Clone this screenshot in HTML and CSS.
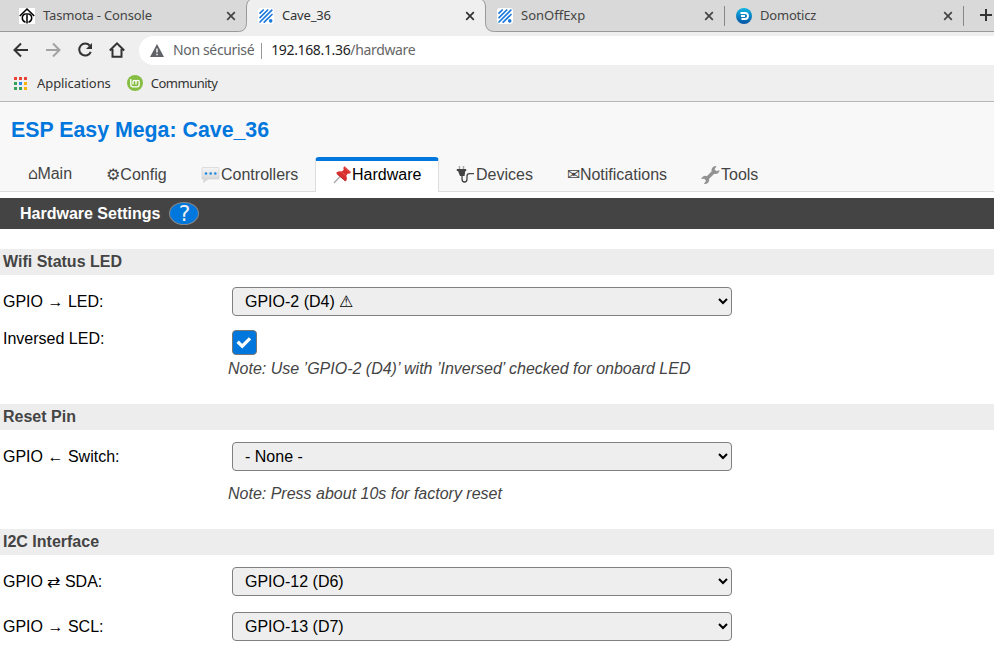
FILE: index.html
```html
<!DOCTYPE html>
<html lang="fr">
<head>
<meta charset="utf-8">
<title>Cave_36</title>
<link rel="stylesheet" href="styles.css">
</head>
<body>
<svg class="defs" width="0" height="0">
  <symbol id="close" viewBox="0 0 10 10"><path d="M1.2 1.2 8.800 8.800M8.800 1.2 1.2 8.800" stroke="currentColor" stroke-width="1.7" fill="none"/></symbol>
  <symbol id="esp" viewBox="0 0 16 16"><rect width="16" height="16" rx="3" fill="#fff"/><path d="M2 5.200 5.200 2M2 9.700 9.700 2M2 14 13.800 2.200M6.200 14.200 14 6.500" stroke="#1b79dc" stroke-width="1.700" stroke-linecap="round"/><circle cx="12.700" cy="12.900" r="1.800" fill="#1b79dc"/></symbol>
</svg>
<div class="strip">
  <svg class="strip-shape" width="994" height="32" viewBox="0 0 994 32">
    <path d="M-1 -1H251Q246.500 1 246.500 7V22.500Q246.500 31.500 238.500 31.500H-1Z"/>
    <path d="M481 -1Q485.500 1 485.500 7V22.500Q485.500 31.500 494.500 31.500H996V-1Z"/>
  </svg>
  <div class="tab t1">
    <svg class="fav" viewBox="0 0 16 16"><rect width="16" height="16" fill="#fff"/><path d="M.8 8 8 1 15.200 8" fill="none" stroke="#000" stroke-width="1.600"/><path d="M8 5V15.500M6.800 5.800Q3.300 6.800 3.300 10T6.500 14.200M9.200 5.800Q12.700 6.800 12.700 10T9.500 14.200" fill="none" stroke="#000" stroke-width="1.500"/></svg>
    <span class="s1">Tasmota - Console</span><svg class="x"><use href="#close"/></svg>
  </div>
  <div class="tab t2 active"><svg class="fav"><use href="#esp"/></svg><span class="s2">Cave_36</span><svg class="x"><use href="#close"/></svg></div>
  <div class="tab t3"><svg class="fav"><use href="#esp"/></svg><span class="s3">SonOffExp</span><svg class="x"><use href="#close"/></svg></div>
  <div class="tab t4">
    <svg class="fav" viewBox="0 0 16 16"><defs><linearGradient id="dom" x2="0" y2="1"><stop stop-color="#10b6e2"/><stop offset="1" stop-color="#0753a5"/></linearGradient></defs><circle cx="8" cy="8" r="8" fill="url(#dom)"/><path d="M4.500 5H9a3 3 0 0 1 0 6H5.500M5 8H9" fill="none" stroke="#fff" stroke-width="1.800"/></svg>
    <span class="s4">Domoticz</span><svg class="x"><use href="#close"/></svg>
  </div>
  <svg class="plus" viewBox="0 0 12 12"><path d="M6 0V12M0 6H12" stroke="#333" stroke-width="2"/></svg>
</div>
<div class="toolbar">
  <svg class="nav-ico" viewBox="0 0 16 16"><path d="M15 8H2M8 1.500 1.500 8 8 14.500" /></svg>
  <svg class="nav-ico dim" viewBox="0 0 16 16"><path d="M1 8H14M8 1.500 14.500 8 8 14.500"/></svg>
  <svg class="nav-ico" viewBox="0 0 16 16"><path d="M12.800 3.600A6 6 0 1 0 13.800 9.800"/><path d="M15 1V7H9Z" class="solid"/></svg>
  <svg class="nav-ico" viewBox="0 0 16 16"><path d="M0.800 8.500 8 1.300 15.200 8.500M3.500 7V14.700H12.500V7"/></svg>
  <div class="omnibox">
    <svg class="warn" viewBox="0 0 14 13"><path d="M7 0 14 13H0Z" fill="#5f6368"/><path d="M7 4.500V8.500M7 9.700V11.200" stroke="#fff" stroke-width="1.400"/></svg>
    <span class="insecure">Non sécurisé</span><i class="bar"></i><span class="url">192.168.1.36<em>/hardware</em></span>
  </div>
</div>
<div class="bookmarks">
  <svg class="apps" viewBox="0 0 13 13"><path fill="#ea4335" d="M0 0h3v3H0zM5 0h3v3H5zM10 0h3v3h-3z"/><path fill="#34a05a" d="M0 5h3v3H0zM0 10h3v3H0zM5 10h3v3H5z"/><path fill="#2d85f0" d="M5 5h3v3H5z"/><path fill="#fbb30b" d="M10 5h3v3h-3zM10 10h3v3h-3z"/></svg>
  <span class="b1">Applications</span>
  <svg class="mint" viewBox="0 0 16 16"><circle cx="8" cy="8" r="8" fill="#86be43"/><path d="M3.800 4V9.500Q3.800 11.800 6 11.800H10Q12.200 11.800 12.200 9.500V7Q12.200 5.300 10.600 5.300T9 7V9.500M9 7Q9 5.300 7.500 5.300T6 7V9.500" fill="none" stroke="#fff" stroke-width="1.300"/></svg>
  <span class="b2">Community</span>
</div>
<header>
  <h1>ESP Easy Mega: Cave_36</h1>
  <nav>
    <a class="n1"><span class="gl home">⌂</span>Main</a>
    <a class="n2"><span class="gl">⚙</span>Config</a>
    <a class="n3"><svg class="emo" viewBox="0 0 19 18"><defs><linearGradient id="bub" x2="0" y2="1"><stop stop-color="#f5f5f5"/><stop offset="1" stop-color="#d0d0d0"/></linearGradient></defs><path d="M1.500 1.500H17.500Q18 1.500 18 2.500V13H7L2.500 16.500 3 13H1V2.500Q1 1.500 1.500 1.500Z" fill="url(#bub)" stroke="#d2d2d2" stroke-width=".7"/><g fill="#2089df"><circle cx="5" cy="7.500" r="1.300"/><circle cx="9.700" cy="7.500" r="1.300"/><circle cx="14.300" cy="7.500" r="1.300"/></g></svg>Controllers</a>
    <a class="n4 on"><svg class="emo" viewBox="0 0 19 18"><path d="M1 17 7 10.500" stroke="#aaa" stroke-width="1.300"/><path d="M11.500 0.300 18 6Q17.300 8.200 14.800 7.600L13.200 9.800Q15 13.500 12.500 15.300L3 7Q5 4.600 8.500 5.500L10.700 3.900Q9.500 1.700 11.500 .3Z" fill="#d8302f"/><path d="M11.800 1.700 17 6.200M9 6.500 12 9" stroke="#ea605a" stroke-width=".9"/><path d="M4.300 8.200 12.300 14.800" stroke="#b5262a" stroke-width="1"/></svg>Hardware</a>
    <a class="n5"><svg class="emo" viewBox="0 0 19 18"><path d="M3.500 0V4M7.500 0V4" stroke="#aaa" stroke-width="1.500"/><path d="M.8 3H10.200V5H9.300L8.500 10H4L2 5H.8Z" fill="#444"/><path d="M6 9V13Q6 16 8.500 16T11 13V10Q11 7.700 13.500 7.700H18" fill="none" stroke="#444" stroke-width="1.300"/></svg>Devices</a>
    <a class="n6"><span class="gl mail">✉</span>Notifications</a>
    <a class="n7"><svg class="emo" viewBox="0 0 19 18"><path d="M5 13.500 13.500 5" stroke="#929292" stroke-width="3.600"/><path d="M15.500 .2A4 4 0 1 0 18.500 4L15.500 5.200 13.500 3.200ZM3 17.700A4 4 0 1 0 .3 13L3.300 12.700 5 14.800Z" fill="#929292"/></svg>Tools</a>
  </nav>
</header>
<div class="title">Hardware Settings<span class="help">?</span></div>
<main>
  <h2>Wifi Status LED</h2>
  <div class="row"><label>GPIO → LED:</label><select><option>GPIO-2 (D4) ⚠</option></select></div>
  <div class="row check"><label>Inversed LED:</label><span class="box"><svg viewBox="0 0 25 25"><path d="M5 11.700 10 16.500 18.500 8" fill="none" stroke="#fff" stroke-width="3.600"/></svg></span></div>
  <p class="note">Note: Use ’GPIO-2 (D4)’ with ’Inversed’ checked for onboard LED</p>
  <h2>Reset Pin</h2>
  <div class="row"><label>GPIO ← Switch:</label><select><option>- None -</option></select></div>
  <p class="note reset">Note: Press about 10s for factory reset</p>
  <h2>I2C Interface</h2>
  <div class="row"><label>GPIO ⇄ SDA:</label><select><option>GPIO-12 (D6)</option></select></div>
  <div class="row"><label>GPIO → SCL:</label><select><option>GPIO-13 (D7)</option></select></div>
</main>
</body>
</html>
```
FILE: styles.css
```css
* { box-sizing: border-box; }
html, body { margin: 0; overflow: hidden; }
body { width: 994px; height: 653px; background: #fff; font: 16px/18px "Liberation Sans", Arial, sans-serif; color: #000; }
svg { display: block; flex: none; overflow: visible; }
.defs { position: absolute; }
.strip, .toolbar, .bookmarks { font-family: "Noto Sans", sans-serif; background: #efefef; display: flex; align-items: center; white-space: nowrap; }
.strip { height: 32px; position: relative; font-size: 13px; color: #444; }
.strip-shape { position: absolute; left: 0; top: 0; overflow: hidden; }
.strip-shape path { fill: #d9d9d9; stroke: #999; }
.tab { position: relative; display: flex; align-items: center; height: 31px; width: 239px; padding: 0 11px; }
.tab span { padding-bottom: 2px; }
.tab.t1 { width: 247px; padding-left: 19px; }
.t3::after, .t4::after { content: ""; position: absolute; right: 0; top: 5px; width: 1px; height: 20px; background: #888; }
.active { color: #333; }
.s1 { letter-spacing: -0.16px; }
.s2, .s4 { letter-spacing: -0.2px; }
.fav { width: 16px; height: 16px; margin: 0 8px 1px 0; }
.tab .x { width: 10px; height: 10px; margin: 0 0 1px auto; }
.plus { position: relative; width: 12px; height: 12px; margin: 0 0 2px 16px; }
.toolbar { height: 33px; padding: 4px 0 0 13px; }
.nav-ico { width: 16px; height: 16px; margin: 0 16px 1px 0; fill: none; stroke: #333; stroke-width: 2; }
.nav-ico.dim { stroke: #a2a2a2; }
.nav-ico .solid { fill: #333; stroke: none; }
.omnibox { flex: 1; height: 29px; margin-left: -2px; padding-left: 11px; background: #fff; border-radius: 15px 0 0 15px; display: flex; align-items: center; font-size: 14px; color: #5f6368; letter-spacing: -0.35px; }
.omnibox span { padding-bottom: 2px; }
.warn { width: 14px; height: 13px; margin: 0 9px 1px 0; }
.bar { width: 1px; height: 16px; background: #999; margin: 0 9px 0 7px; }
.url { color: #222; }
.url em { color: #666; font-style: normal; }
.bookmarks { height: 37px; padding-left: 14px; border-bottom: 1px solid #b7b7b7; font-size: 13px; color: #333; }
.apps { width: 13px; height: 13px; margin-right: 10px; }
.b1 { letter-spacing: -0.08px; }
.b2 { letter-spacing: -0.5px; }
.mint { width: 16px; height: 16px; margin: 0 8px 0 16px; }
header { height: 90px; background: #f8f8f8; border-bottom: 1px solid #ddd; display: flex; flex-direction: column; justify-content: space-between; }
h1 { margin: 15px 0 0 11px; font-size: 21.33px; line-height: 26px; color: #0077dd; }
nav { display: flex; gap: 3px; padding-left: 12px; height: 35px; margin-bottom: -1px; }
nav a { display: flex; align-items: center; height: 35px; padding: 0 0 0 16px; color: #444; border: 0 solid transparent; }
.n1 { width: 75px; padding-bottom: 1px; }
.n1 .gl { width: 9.4px; }
.n2 { width: 92px; }
.n3 { width: 129px; }
.n4 { width: 124px; margin-left: -2px; }
.n5 { width: 107px; padding-left: 14px; }
.n6 { width: 132px; padding-left: 15px; }
.n7 { width: 90px; padding-left: 14px; }
nav a.on { background: #fff; color: #000; border: 1px solid #ddd; border-top: 4px solid #0077dd; border-bottom: 0; border-radius: 4px 4px 0 0; padding: 0 0 4px 17px; }
.gl { font-family: "DejaVu Sans", sans-serif; font-size: 16px; }
.mail { margin-right: -0.5px; }
.emo { width: 19px; height: 18px; margin-right: 1px; }
.on .emo { margin-right: 0; }
.title { margin-top: 6px; height: 31px; padding-left: 20px; background: #444; color: #fff; font-weight: bold; display: flex; align-items: center; }
.help { width: 30px; height: 23px; margin-left: 9px; border: 1px solid #888; border-radius: 50%; background: #0077dd; color: #eee; font: 22px/22px "DejaVu Sans", sans-serif; text-align: center; }
main { padding-top: 20px; }
h2 { margin: 0; height: 26px; padding-left: 3px; background: #ededed; color: #444; font-size: 16px; line-height: 25px; }
.row { display: flex; height: 45px; padding: 12px 0 0 3px; }
label { width: 229px; line-height: 29px; }
select { width: 500px; height: 29px; padding: 0 0 0 8px; border: 1px solid #808080; border-radius: 4px; background: #eee; color: #000; font: 16px "Liberation Sans", sans-serif; }
.check { height: 40px; padding-top: 10px; }
.check label { line-height: 18px; }
.box { width: 25px; height: 25px; border: 1px solid #777; border-radius: 4px; background: #0077dd; }
.box svg { width: 23px; height: 23px; }
.note { margin: 0 0 26px; padding-left: 228px; font-style: italic; color: #444; line-height: 18px; }
.note.reset { padding-top: 10px; }
```
